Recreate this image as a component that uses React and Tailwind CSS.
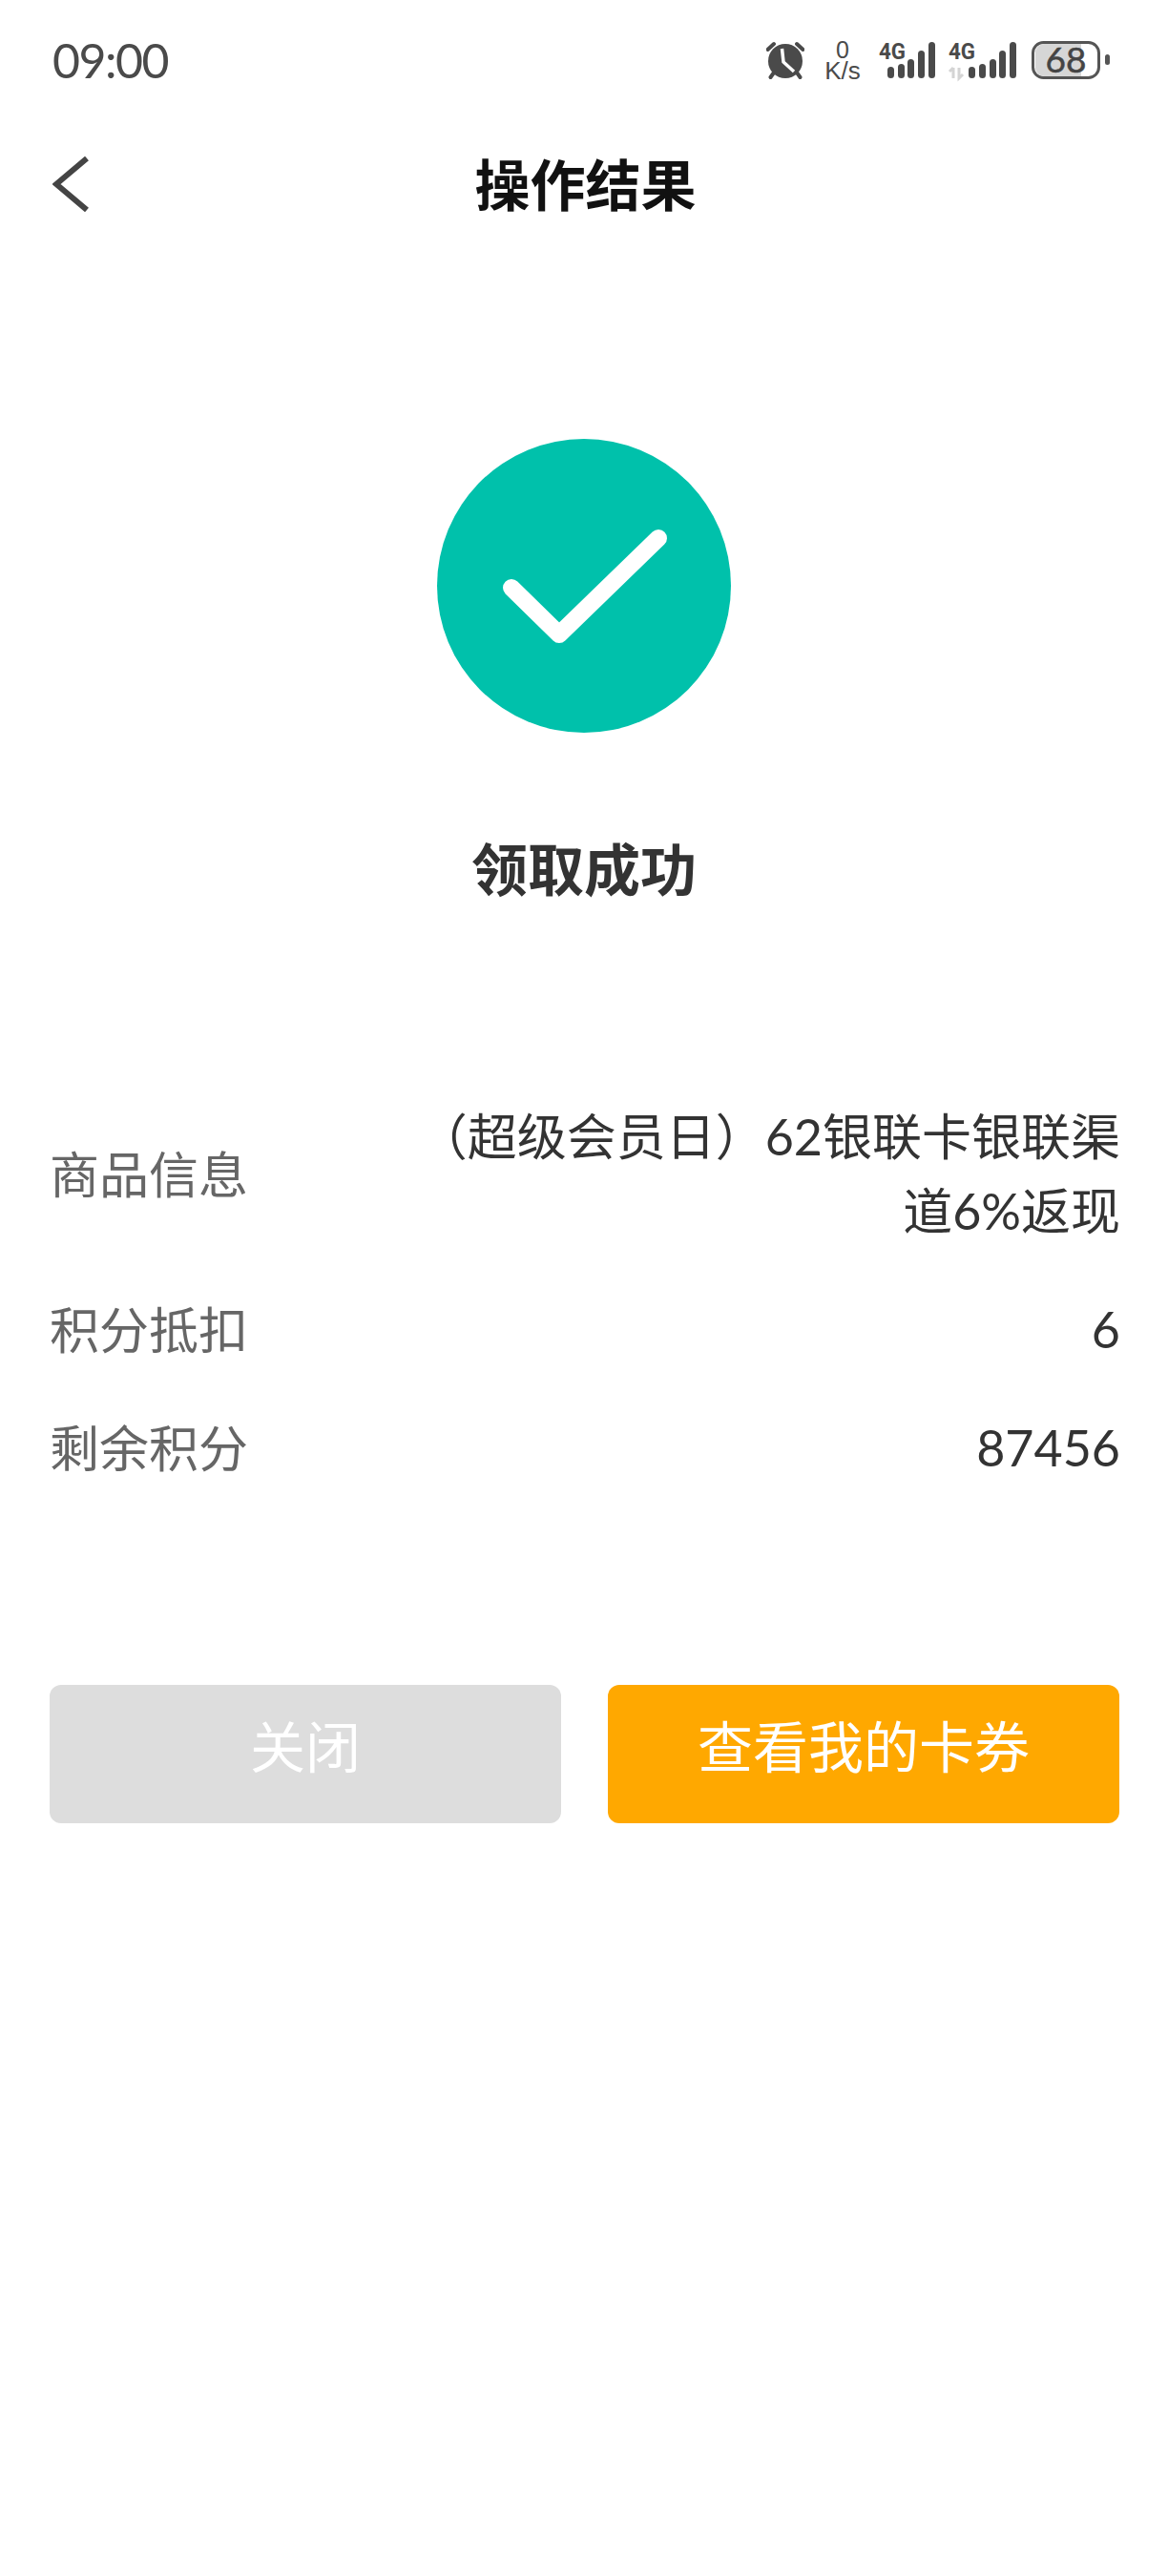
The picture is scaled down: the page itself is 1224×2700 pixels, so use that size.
import React from "react";

const cjk = "font-['Noto_Sans_CJK_SC',sans-serif]";

const rows = [
	{ label: "商品信息", value: "（超级会员日）62银联卡银联渠道6%返现" },
	{ label: "积分抵扣", value: "6" },
	{ label: "剩余积分", value: "87456" },
];

function Alarm() {
	return (
		<svg width="40" height="40" viewBox="0 0 40 40" fill="none">
			<path d="M1.5 9 L8 3 M32 3 L38.5 9" stroke="#4a4a4a" strokeWidth="4" strokeLinecap="round" />
			<path d="M8 33 L4.5 38 M32 33 L35.5 38" stroke="#4a4a4a" strokeWidth="4" strokeLinecap="round" />
			<circle cx="20" cy="21" r="18" fill="#4a4a4a" />
			<path d="M16.5 8 L18 22 L29 32" stroke="#fff" strokeWidth="3.5" fill="none" />
		</svg>
	);
}

function Signal({ bars, arrows }) {
	const width = arrows ? 71 : 59;
	return (
		<svg width={width} height="40" viewBox={`0 0 ${width} 40`} className="overflow-visible">
			<text
				x="0"
				y="19"
				fontFamily="Roboto, sans-serif"
				fontWeight="700"
				fontSize="23"
				fill="#4a4a4a"
				textLength="28"
				lengthAdjust="spacingAndGlyphs"
			>
				4G
			</text>
			{arrows && (
				<path d="M5 39 V28 M1 32 L5 28 M11 28 V39 L15 35" stroke="#d4d4d4" strokeWidth="3" fill="none" />
			)}
			{bars.map((b) => (
				<rect key={b.x} x={b.x} y={b.y} width="7" height={39 - b.y} rx="3.5" fill="#4a4a4a" />
			))}
		</svg>
	);
}

function Battery() {
	return (
		<svg width="82" height="40" viewBox="0 0 82 40" className="overflow-visible">
			<rect x="1.5" y="1.5" width="69" height="37" rx="11" fill="#fff" stroke="#555" strokeWidth="3" />
			<path d="M4 12 a9 9 0 0 1 9 -9 H52 V37 H13 a9 9 0 0 1 -9 -9 Z" fill="#d6d6d6" />
			<text
				x="36"
				y="33"
				textAnchor="middle"
				fontFamily="Lato, sans-serif"
				fontSize="37"
				fill="#444"
				stroke="#444"
				strokeWidth="0.5"
			>
				68
			</text>
			<rect x="77" y="14" width="5" height="11" rx="2.5" fill="#555" />
		</svg>
	);
}

function StatusBar() {
	return (
		<div className="flex h-[126px] items-center justify-between pl-[55px] pr-[61px]">
			<span className="font-['Lato',sans-serif] text-[50px] leading-none tracking-[-1.5px] text-[#4a4a4a]">
				09:00
			</span>
			<div className="flex items-center">
				<Alarm />
				<div className="ml-[20px] flex w-[40px] flex-col items-center font-['Liberation_Sans',sans-serif] text-[#4a4a4a]">
					<span className="text-[25px] leading-[22px]">0</span>
					<span className="text-[26px] leading-[22px]">K/s</span>
				</div>
				<div className="ml-[18px]">
					<Signal
						bars={[
							{ x: 9, y: 27 },
							{ x: 20, y: 24 },
							{ x: 30, y: 19 },
							{ x: 41, y: 10 },
							{ x: 52, y: 1 },
						]}
					/>
				</div>
				<div className="ml-[14px]">
					<Signal
						arrows
						bars={[
							{ x: 21, y: 27 },
							{ x: 32, y: 24 },
							{ x: 43, y: 19 },
							{ x: 53, y: 10 },
							{ x: 64, y: 1 },
						]}
					/>
				</div>
				<div className="ml-[16px]">
					<Battery />
				</div>
			</div>
		</div>
	);
}

export default function App() {
	return (
		<div className={`min-h-[2700px] bg-white ${cjk}`}>
			<StatusBar />

			<div className="grid h-[134px] grid-cols-[1fr_auto_1fr] items-center pl-[55px] pr-[52px]">
				<svg width="38" height="58" viewBox="0 0 38 58" fill="none">
					<path d="M36 2 L4 29 L36 56" stroke="#444" strokeWidth="6" />
				</svg>
				<h1 className="pb-[4px] text-[58px] font-bold leading-none text-[#111]">操作结果</h1>
				<div />
			</div>

			<div className="mt-[200px] flex justify-center">
				<div className="flex h-[308px] w-[308px] items-center justify-center rounded-full bg-[#00c1ab]">
					<svg width="308" height="308" viewBox="0 0 308 308" fill="none">
						<path
							d="M78 156 L128 205 L232 104"
							stroke="#fff"
							strokeWidth="18"
							strokeLinecap="round"
							strokeLinejoin="round"
						/>
					</svg>
				</div>
			</div>

			<p className="mt-[102px] text-center text-[59px] font-bold leading-[78px] text-[#333]">领取成功</p>

			<div className="mt-[204px] flex flex-col gap-[46px] pl-[52px] pr-[50px]">
				{rows.map((row) => (
					<div key={row.label} className="flex items-center justify-between text-[52px] leading-[78px]">
						<span className="pb-[3px] leading-[75px] text-[#666]">{row.label}</span>
						<span className="w-[750px] text-right font-['Lato','Noto_Sans_CJK_SC',sans-serif] text-[#333]">
							{row.value}
						</span>
					</div>
				))}
			</div>

			<div className="mt-[210px] flex justify-between pl-[52px] pr-[51px]">
				<button className="h-[145px] w-[536px] rounded-[12px] bg-[#dddddd] pb-[20px] text-[58px] text-white">
					关闭
				</button>
				<button className="h-[145px] w-[536px] rounded-[12px] bg-[#ffa800] pb-[20px] text-[58px] text-white">
					查看我的卡券
				</button>
			</div>
		</div>
	);
}
